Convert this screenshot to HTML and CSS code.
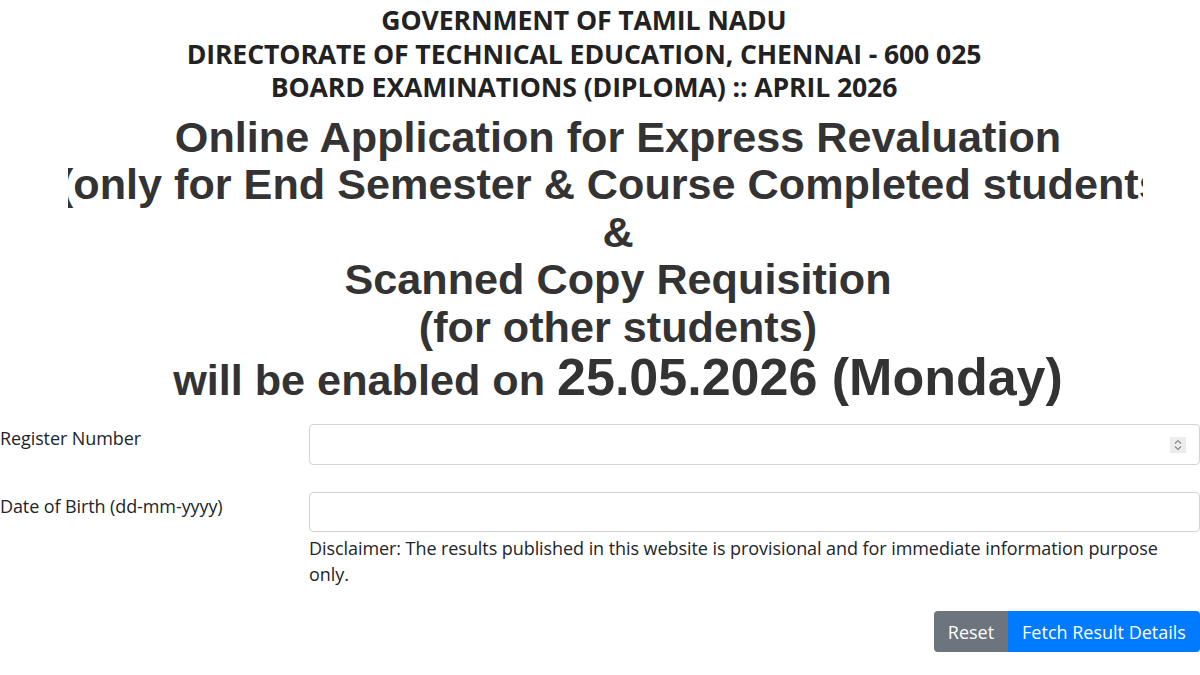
FILE: index.html
```html
<!DOCTYPE html>
<html lang="en">
<head>
<meta charset="utf-8">
<title>Express Revaluation</title>
<link rel="stylesheet" href="styles.css">
</head>
<body>
<header class="top">
  <div class="gov">GOVERNMENT OF TAMIL NADU</div>
  <div class="gov">DIRECTORATE OF TECHNICAL EDUCATION, CHENNAI - 600 025</div>
  <div class="gov">BOARD EXAMINATIONS (DIPLOMA) :: APRIL 2026</div>
</header>
<section class="notice">
  <div class="line">Online Application for Express Revaluation</div>
  <div class="clip"><div class="clip-inner"><span class="nowrap">(only for End Semester &amp; Course Completed students)</span></div></div>
  <div class="line">&amp;</div>
  <div class="line">Scanned Copy Requisition</div>
  <div class="line">(for other students)</div>
  <div class="line last">will be enabled on <span class="date">25.05.2026 (Monday)</span></div>
</section>
<form class="form">
  <div class="row">
    <label class="lbl" for="reg">Register Number</label>
    <div class="field">
      <div class="input num" id="reg">
        <span class="spin"><svg width="12" height="14" viewBox="0 0 12 14"><path d="M3 5.5 L6 2.5 L9 5.5" fill="none" stroke="#8a8a8a" stroke-width="1.2"/><path d="M3 8.5 L6 11.5 L9 8.5" fill="none" stroke="#8a8a8a" stroke-width="1.2"/></svg></span>
      </div>
    </div>
  </div>
  <div class="row row2">
    <label class="lbl" for="dob">Date of Birth (dd-mm-yyyy)</label>
    <div class="field">
      <div class="input dob" id="dob"></div>
      <p class="disc">Disclaimer: The results published in this website is provisional and for immediate information purpose only.</p>
    </div>
  </div>
  <div class="actions">
    <div class="btn-group">
      <button type="button" class="btn reset">Reset</button>
      <button type="button" class="btn fetch">Fetch Result Details</button>
    </div>
  </div>
</form>
</body>
</html>
```
FILE: styles.css
```css
* { box-sizing: border-box; }
html, body { margin: 0; padding: 0; background: #fff; }
body { width: 1200px; height: 675px; overflow: hidden; font-family: "Open Sans", "Noto Sans", sans-serif; color: #212529; }

.top { padding-top: 4px; padding-right: 32px; text-align: center; }
.gov { font-weight: 700; font-size: 26.6px; line-height: 33.5px; letter-spacing: -0.1px; color: #222; }

.notice { margin-top: 9px; padding-left: 36px; text-align: center; font-family: "Liberation Sans", Arial, sans-serif; font-weight: 700; color: #333; }
.line { font-size: 43.2px; line-height: 47.5px; white-space: nowrap; }
.line.last { line-height: 53px; }
.date { font-size: 52px; }
.clip { margin-left: 32px; width: 1075px; overflow: hidden; font-size: 43.2px; line-height: 47.5px; }
.clip-inner { display: flex; justify-content: center; padding-left: 25px; }
.nowrap { white-space: nowrap; flex: none; }

.form { margin-top: 17px; }
.row { display: grid; grid-template-columns: 309px 1fr; }
.row2 { margin-top: 27px; }
.lbl { font-size: 18px; line-height: 26px; padding-top: 1px; color: #212529; letter-spacing: -0.1px; }
.input { height: 41px; border: 1px solid #ced4da; border-radius: 4px; background: #fff; position: relative; }
.input.dob { height: 40px; }
.spin { position: absolute; right: 13px; top: 12px; width: 16px; height: 16px; background: #ececec; display: flex; align-items: center; justify-content: center; }
.disc { margin: 3px 0 0; font-size: 18px; line-height: 26px; color: #212529; padding-right: 20px; letter-spacing: -0.07px; }

.actions { display: flex; justify-content: flex-end; margin-top: 24px; }
.btn-group { display: flex; }
.btn { height: 41px; border: 0; font-family: "Open Sans", "Noto Sans", sans-serif; font-size: 18px; color: #fff; padding: 0; }
.reset { background: #6c757d; border-radius: 4px 0 0 4px; width: 74px; }
.fetch { background: #007bff; border-radius: 0 4px 4px 0; width: 192px; }
```
